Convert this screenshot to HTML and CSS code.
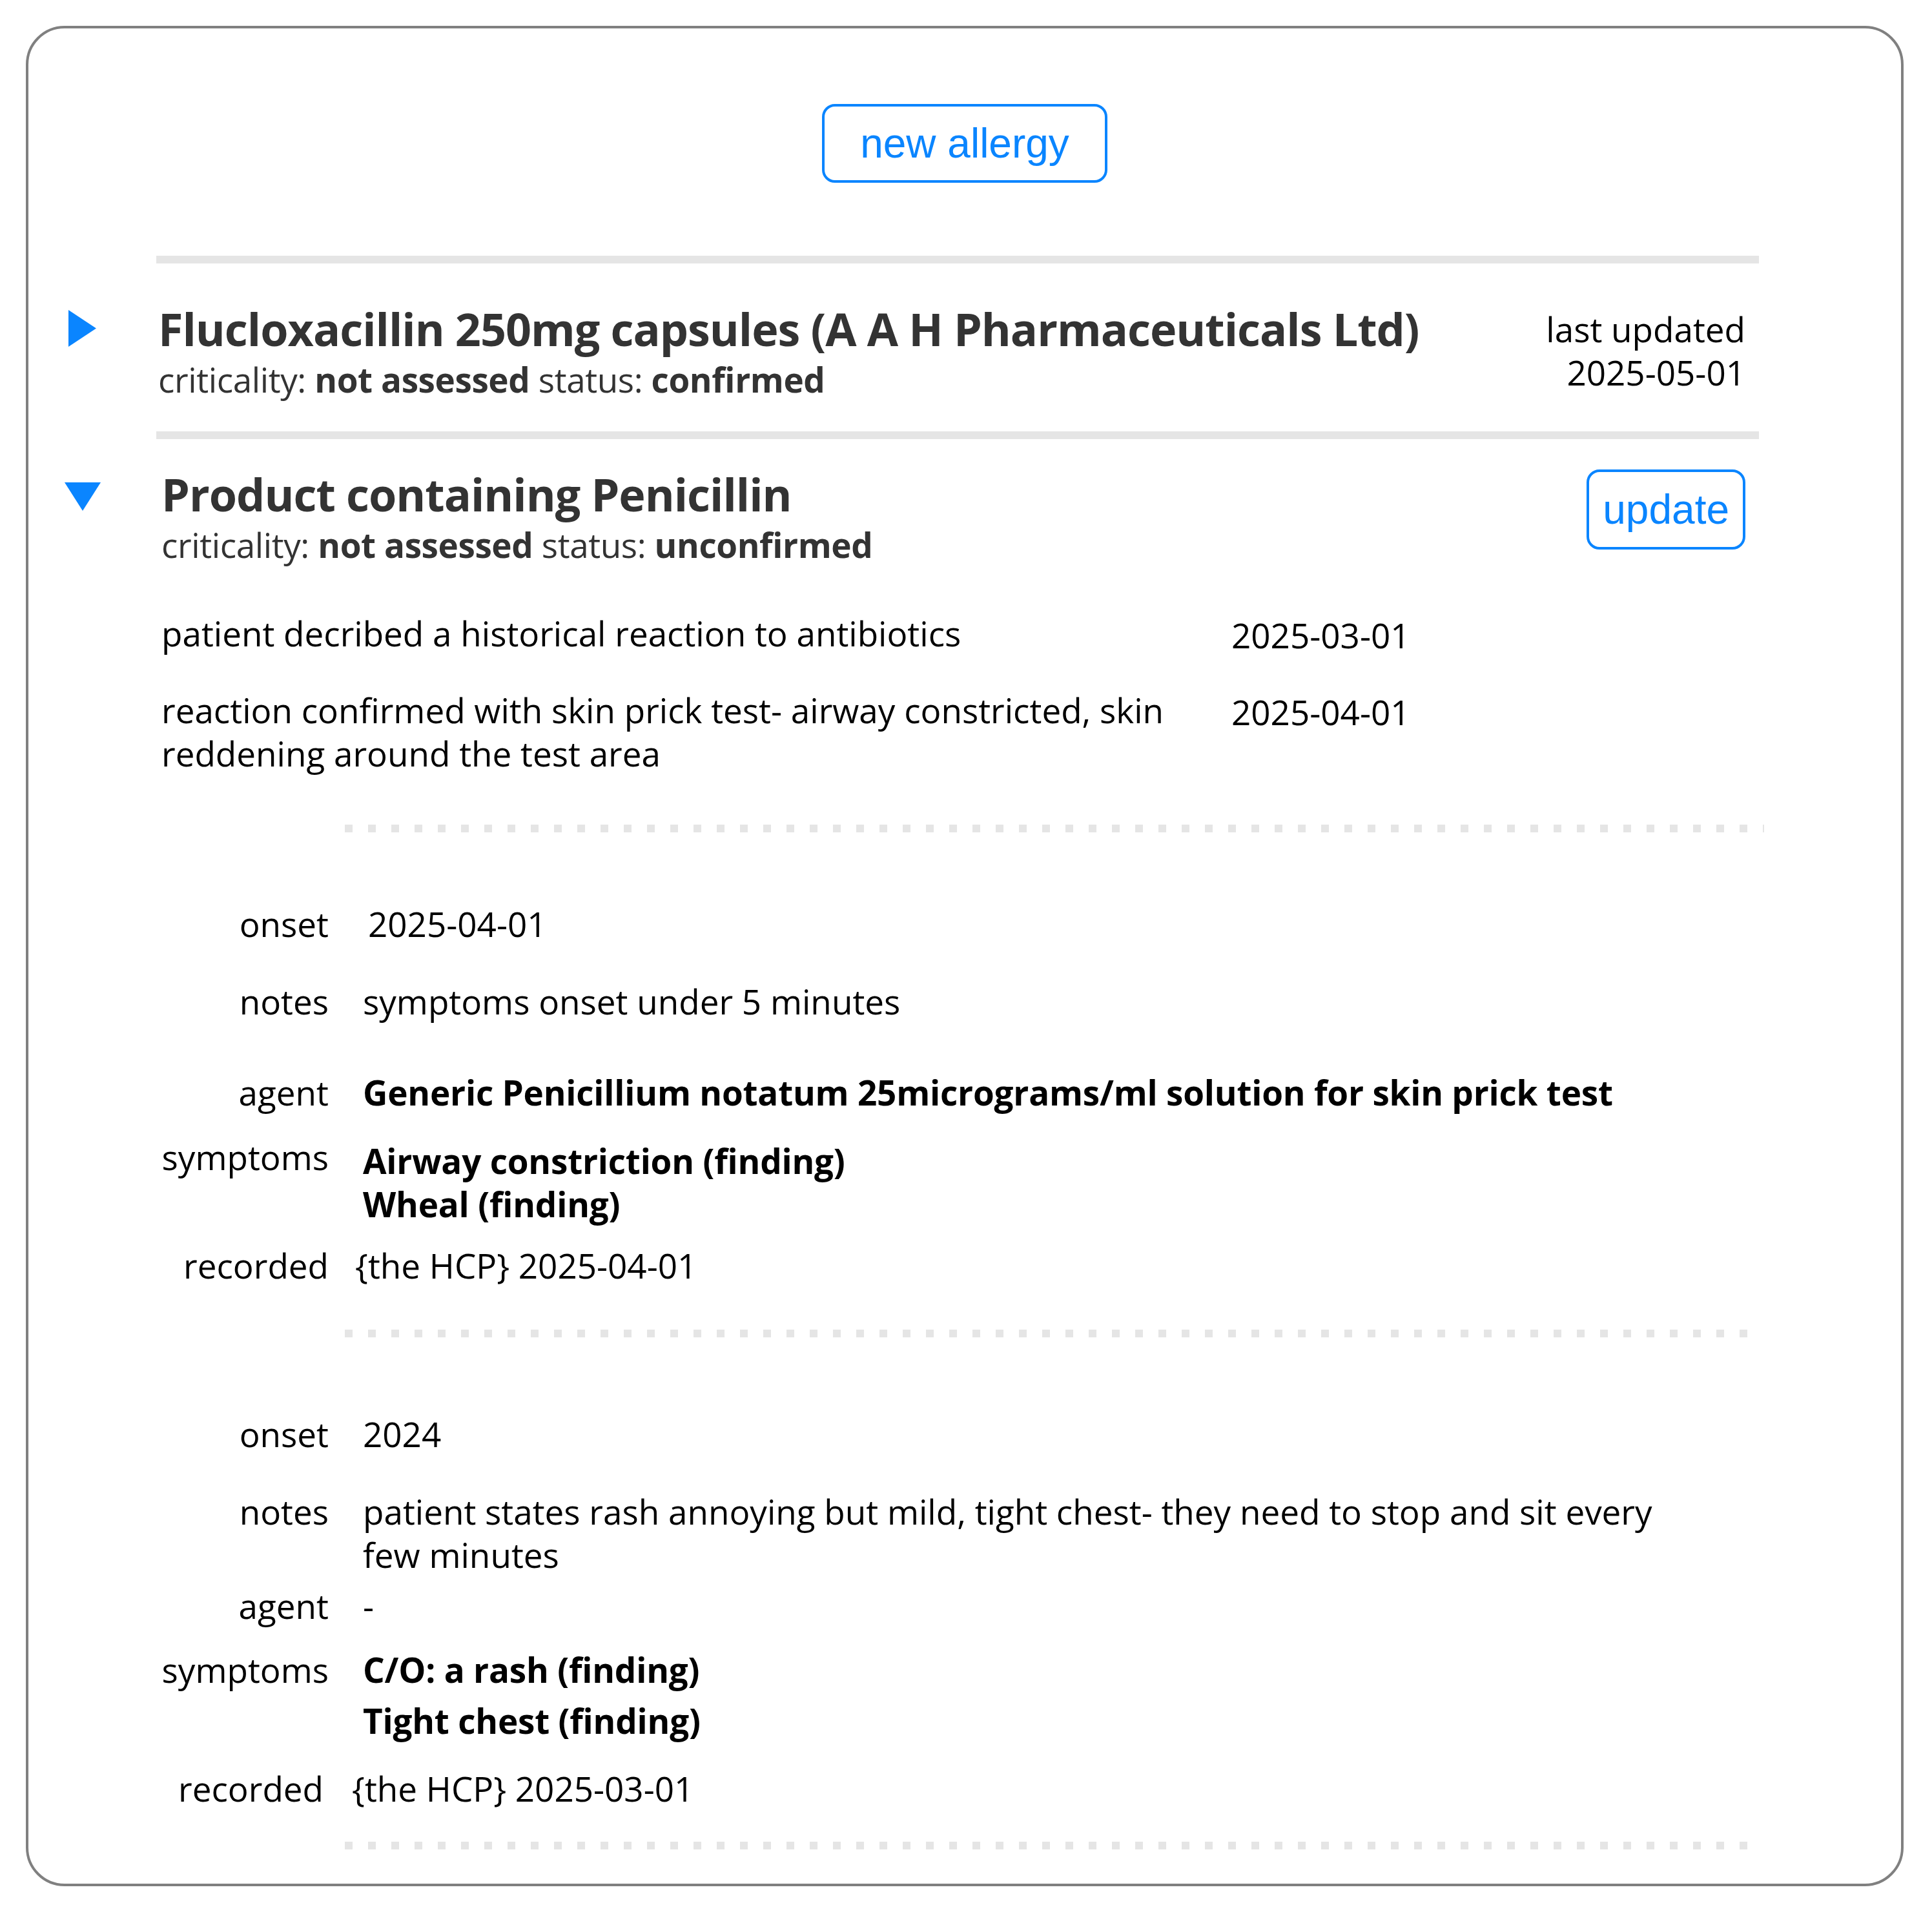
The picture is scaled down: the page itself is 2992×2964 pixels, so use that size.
FILE: index.html
```html
<!DOCTYPE html>
<html lang="en">
<head>
<meta charset="utf-8">
<title>Allergies</title>
<link rel="stylesheet" href="styles.css">
</head>
<body>
<div class="panel">
  <div class="toolbar">
    <button class="btn btn--new" type="button">new allergy</button>
  </div>

  <div class="allergies">
    <section class="allergy">
      <div class="summary summary--closed">
        <span class="marker marker--closed">
          <svg width="43" height="57" viewBox="0 0 43 57" aria-hidden="true"><path d="M0 0 L43 28.5 L0 57 Z" class="tri"/></svg>
        </span>
        <div class="heading">
          <div class="title">Flucloxacillin 250mg capsules (A A H Pharmaceuticals Ltd)</div>
          <div class="meta">criticality: <b>not assessed</b> status: <b>confirmed</b></div>
        </div>
        <div class="updated">last updated<br>2025-05-01</div>
      </div>
    </section>

    <section class="allergy">
      <div class="summary summary--open">
        <span class="marker marker--open">
          <svg width="56" height="44" viewBox="0 0 56 44" aria-hidden="true"><path d="M0 0 L56 0 L28 44 Z" class="tri"/></svg>
        </span>
        <div class="heading">
          <div class="title">Product containing Penicillin</div>
          <div class="meta">criticality: <b>not assessed</b> status: <b>unconfirmed</b></div>
        </div>
        <button class="btn btn--update" type="button">update</button>
      </div>

      <div class="details">
        <div class="notes">
          <div class="note">
            <div class="note-text">patient decribed a historical reaction to antibiotics</div>
            <div class="note-date">2025-03-01</div>
          </div>
          <div class="note">
            <div class="note-text">reaction confirmed with skin prick test- airway constricted, skin reddening around the test area</div>
            <div class="note-date">2025-04-01</div>
          </div>
        </div>

        <div class="dots dots--wide"></div>
        <div class="reaction reaction--one">
          <div class="field field--onset">
            <div class="field-label">onset</div>
            <div class="field-value field-value--nudge">2025-04-01</div>
          </div>
          <div class="field field--notes">
            <div class="field-label">notes</div>
            <div class="field-value">symptoms onset under 5 minutes</div>
          </div>
          <div class="field field--agent">
            <div class="field-label">agent</div>
            <div class="field-value strong">Generic Penicillium notatum 25micrograms/ml solution for skin prick test</div>
          </div>
          <div class="field field--symptoms">
            <div class="field-label">symptoms</div>
            <div class="field-value strong symptom-list">
              <div class="symptom">Airway constriction (finding)</div>
              <div class="symptom">Wheal (finding)</div>
            </div>
          </div>
          <div class="field field--recorded">
            <div class="field-label">recorded</div>
            <div class="field-value">{the HCP} 2025-04-01</div>
          </div>
        </div>

        <div class="dots dots--mid"></div>
        <div class="reaction reaction--two">
          <div class="field field--onset">
            <div class="field-label">onset</div>
            <div class="field-value">2024</div>
          </div>
          <div class="field field--notes">
            <div class="field-label">notes</div>
            <div class="field-value">patient states rash annoying but mild, tight chest- they need to stop and sit every few minutes</div>
          </div>
          <div class="field field--agent">
            <div class="field-label">agent</div>
            <div class="field-value">-</div>
          </div>
          <div class="field field--symptoms">
            <div class="field-label">symptoms</div>
            <div class="field-value strong symptom-list">
              <div class="symptom">C/O: a rash (finding)</div>
              <div class="symptom">Tight chest (finding)</div>
            </div>
          </div>
          <div class="field field--recorded">
            <div class="field-label">recorded</div>
            <div class="field-value">{the HCP} 2025-03-01</div>
          </div>
        </div>
        <div class="dots dots--last"></div>
      </div>
    </section>
  </div>
</div>
</body>
</html>
```

FILE: styles.css
```css
* {
  box-sizing: border-box;
}

html,
body {
  background: #ffffff;
}

body {
  margin: 0;
  font-family: "Open Sans", "Noto Sans", sans-serif;
  font-size: 53px;
  line-height: 67px;
  color: #000000;
}

.panel {
  width: 2908px;
  margin: 40px 0 0 40px;
  border: 4px solid #808080;
  border-radius: 60px;
  padding: 117px 0 53px;
}

.toolbar {
  display: flex;
  justify-content: center;
}

.btn {
  font-family: "Liberation Sans", Arial, sans-serif;
  font-size: 64px;
  line-height: 74px;
  color: #0a85ff;
  background: #ffffff;
  border: 4px solid #0a85ff;
  border-radius: 20px;
  margin: 0;
  flex: none;
}

.btn--new {
  padding: 20px 55px;
}

.btn--update {
  padding: 21px 21px;
  margin-top: 7px;
}

.tri {
  fill: #0a85ff;
}

.allergies {
  margin: 113px 0 0 198px;
  width: 2482px;
}

.allergy {
  border-top: 12px solid #e5e5e5;
}

.summary {
  display: flex;
  align-items: flex-start;
  margin-left: -142px;
  padding-right: 21px;
}

.summary--closed {
  padding-top: 56px;
  padding-bottom: 47px;
}

.summary--open {
  padding-top: 40px;
}

.marker {
  flex: none;
  display: flex;
}

.marker--closed {
  width: 145px;
  padding: 16px 0 0 6px;
}

.marker--open {
  width: 150px;
  padding-top: 27px;
}

.heading {
  flex: 1;
  min-width: 0;
}

.title {
  font-weight: 700;
  font-size: 70px;
  line-height: 90px;
  letter-spacing: -1px;
  color: #333333;
}

.meta {
  color: #333333;
  letter-spacing: -0.4px;
}

.meta b {
  font-weight: 700;
}

.updated {
  flex: none;
  text-align: right;
  margin-top: 12px;
}

.details {
  padding-left: 8px;
}

.notes {
  margin-top: 70px;
}

.note {
  display: flex;
  align-items: flex-start;
}

.note + .note {
  margin-top: 49px;
}

.note-text {
  width: 1610px;
  flex: none;
}

.note-date {
  margin-left: 47px;
  padding-top: 3px;
}

.dots {
  height: 12px;
  margin-left: 284px;
  background: repeating-linear-gradient(90deg, #e5e5e5 0 12px, transparent 12px 36px);
}

.dots--wide {
  width: 2198px;
  margin-top: 77px;
}

.dots--mid {
  width: 2172px;
  margin-top: 66px;
}

.dots--last {
  width: 2172px;
  margin-top: 49px;
}

.field {
  display: grid;
  grid-template-columns: 259px 1fr;
  column-gap: 53px;
  width: 2362px;
}

.field-label {
  text-align: right;
}

.field-value--nudge {
  padding-left: 8px;
}

.strong {
  font-weight: 700;
  letter-spacing: -0.2px;
}

/* first reaction */
.reaction--one .field--onset { margin-top: 108px; }
.reaction--one .field--notes { margin-top: 53px; }
.reaction--one .field--agent { margin-top: 74px; }
.reaction--one .field--symptoms { margin-top: 33px; }
.reaction--one .field--recorded { margin-top: 28px; }
.reaction--one .symptom:first-child { margin-top: 6px; }
.reaction--one .field--recorded .field-value { margin-left: -12px; }

/* second reaction */
.reaction--two .field--onset { margin-top: 116px; }
.reaction--two .field--notes { margin-top: 53px; }
.reaction--two .field--agent { margin-top: 12px; }
.reaction--two .field--symptoms { margin-top: 32px; }
.reaction--two .field--recorded { margin-top: 38px; }
.reaction--two .symptom + .symptom { margin-top: 12px; }
.reaction--two .field--recorded .field-label { padding-right: 8px; }
.reaction--two .field--recorded .field-value { margin-left: -17px; }
```
